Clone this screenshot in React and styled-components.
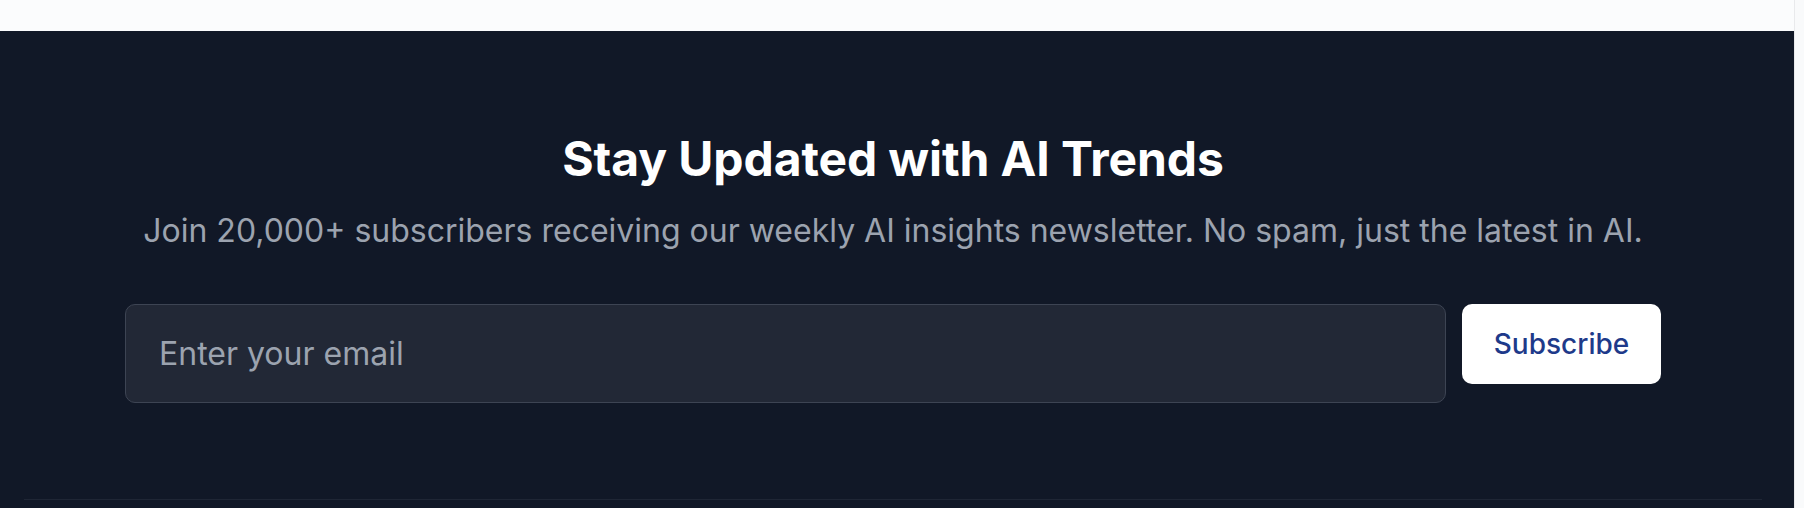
import React from 'react';
import styled, { createGlobalStyle } from 'styled-components';

const GlobalStyle = createGlobalStyle`
  html, body {
    margin: 0;
    padding: 0;
    background: #111827;
    font-family: 'Inter', 'Liberation Sans', sans-serif;
    -webkit-font-smoothing: antialiased;
  }
  * { box-sizing: border-box; }
`;

const Shell = styled.div`
  display: flex;
  width: 100%;
  height: 508px;
  overflow: hidden;
`;

const Page = styled.div`
  flex: 1;
  display: flex;
  flex-direction: column;
`;

const ScrollTrack = styled.div`
  width: 10px;
  background: #f9fafb;
  border-left: 1px solid #e9eaec;
`;

const TopStrip = styled.div`
  height: 31px;
  background: #fbfcfd;
`;

const Newsletter = styled.section`
  flex: 1;
  background: #111827;
  display: flex;
  flex-direction: column;
`;

const Container = styled.div`
  margin: 0 32px 8px 24px;
  padding-top: 100px;
  display: flex;
  flex-direction: column;
  align-items: center;
  flex: 1;
  border-bottom: 1px solid #1f2635;
`;

const Title = styled.h2`
  margin: 0;
  font-size: 48px;
  line-height: 56px;
  font-weight: 700;
  color: #ffffff;
  letter-spacing: -0.1px;
`;

const Subtitle = styled.p`
  margin: 24px 0 0;
  font-size: 32px;
  line-height: 40px;
  color: #9ca3af;
`;

const Form = styled.form`
  margin-top: 53px;
  width: 1536px;
  display: flex;
  align-items: flex-start;
  gap: 16px;
`;

const EmailInput = styled.input`
  flex: 1;
  height: 99px;
  padding: 0 33px;
  background: #222836;
  border: 1px solid #3d4453;
  border-radius: 10px;
  color: #ffffff;
  font-family: inherit;
  font-size: 32px;
  outline: none;

  &::placeholder {
    color: #9ca3af;
  }
`;

const SubscribeButton = styled.button`
  width: 199px;
  height: 80px;
  background: #ffffff;
  border: none;
  border-radius: 10px;
  color: #1e3a8a;
  font-family: inherit;
  font-size: 28px;
  font-weight: 500;
  cursor: pointer;
`;

export default function App() {
  return (
    <Shell>
      <GlobalStyle />
      <Page>
        <TopStrip />
        <Newsletter>
          <Container>
            <Title>Stay Updated with AI Trends</Title>
            <Subtitle>
              Join 20,000+ subscribers receiving our weekly AI insights newsletter. No spam, just the latest in AI.
            </Subtitle>
            <Form onSubmit={(e) => e.preventDefault()}>
              <EmailInput type="email" placeholder="Enter your email" />
              <SubscribeButton type="submit">Subscribe</SubscribeButton>
            </Form>
          </Container>
        </Newsletter>
      </Page>
      <ScrollTrack />
    </Shell>
  );
}
